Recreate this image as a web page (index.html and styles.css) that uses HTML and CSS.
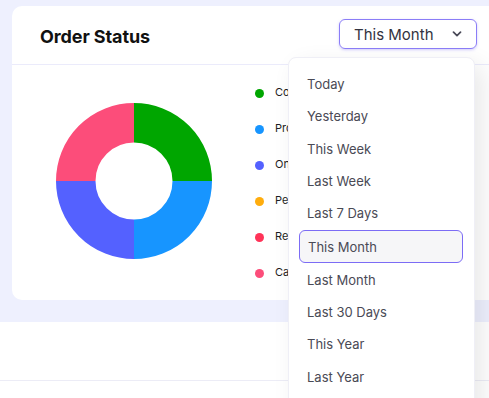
FILE: index.html
```html
<!DOCTYPE html>
<html>
<head>
<meta charset="utf-8">
<link rel="stylesheet" href="styles.css">
</head>
<body>
<div class="page">
  <div class="card">
    <div class="card-head">
      <h2 class="title">Order Status</h2>
      <div class="select">
        <span>This Month</span>
        <svg class="chev" width="10" height="6" viewBox="0 0 10 6"><path d="M1.5 1.2l3.5 3.5 3.5-3.5" fill="none" stroke="#4a4a58" stroke-width="1.7" stroke-linecap="round" stroke-linejoin="round"/></svg>
      </div>
    </div>
    <div class="card-body">
      <svg class="donut" width="156" height="156" viewBox="0 0 156 156">
        <path d="M78 19.75A58.25 58.25 0 0 1 136.25 78" fill="none" stroke="#00a600" stroke-width="39.5"/>
        <path d="M136.25 78A58.25 58.25 0 0 1 78 136.25" fill="none" stroke="#1795ff" stroke-width="39.5"/>
        <path d="M78 136.25A58.25 58.25 0 0 1 19.75 78" fill="none" stroke="#5461ff" stroke-width="39.5"/>
        <path d="M19.75 78A58.25 58.25 0 0 1 78 19.75" fill="none" stroke="#fc4d7a" stroke-width="39.5"/>
      </svg>
      <ul class="legend">
        <li><i class="dot green"></i>Completed</li>
        <li><i class="dot blue"></i>Processing</li>
        <li><i class="dot indigo"></i>On Hold</li>
        <li><i class="dot orange"></i>Pending</li>
        <li><i class="dot red"></i>Refunded</li>
        <li><i class="dot pink"></i>Cancelled</li>
      </ul>
    </div>
  </div>
  <div class="lower">
    <div class="lower-head"></div>
  </div>
</div>
<ul class="menu">
  <li>Today</li>
  <li>Yesterday</li>
  <li>This Week</li>
  <li>Last Week</li>
  <li>Last 7 Days</li>
  <li class="active">This Month</li>
  <li>Last Month</li>
  <li>Last 30 Days</li>
  <li>This Year</li>
  <li>Last Year</li>
</ul>
</body>
</html>
```
FILE: styles.css
```css
html, body {
  margin: 0;
  padding: 0;
  overflow: hidden;
  height: 398px;
}
body {
  background: #eef0fe;
  font-family: Inter, "Noto Sans", sans-serif;
  position: relative;
}
.page {
  padding-top: 6px;
}
.card {
  margin-left: 12px;
  width: 497px;
  background: #fff;
  border-radius: 10px;
  margin-bottom: 22px;
}
.card-head {
  height: 58px;
  display: flex;
  align-items: center;
  border-bottom: 1px solid #ebebfb;
  padding-left: 28px;
}
.title {
  margin: 2px 0 0 0;
  font-size: 18px;
  font-weight: 700;
  color: #111;
  letter-spacing: -0.1px;
}
.select {
  margin-left: auto;
  margin-right: 32px;
  margin-top: -2px;
  width: 138px;
  height: 30px;
  box-sizing: border-box;
  border: 1.5px solid #8b7df7;
  border-radius: 6px;
  box-shadow: 0 1px 3px rgba(124, 108, 245, 0.35);
  display: flex;
  align-items: center;
  padding: 0 14px 0 14px;
  font-size: 15px;
  color: #333340;
}
.select .chev {
  margin-left: auto;
}
.card-body {
  height: 235px;
  display: flex;
  align-items: flex-start;
  padding: 9px 0 0 44px;
  box-sizing: border-box;
}
.donut {
  margin-top: 29px;
  display: block;
}
.legend {
  list-style: none;
  margin: 0 0 0 43px;
  padding: 0;
}
.legend li {
  height: 36px;
  display: flex;
  align-items: center;
  font-size: 11px;
  font-weight: 400;
  color: #1e1e24;
}
.dot {
  width: 9px;
  height: 9px;
  border-radius: 50%;
  margin-right: 11px;
  margin-top: 3px;
}
.green { background: #00a600; }
.blue { background: #1795ff; }
.indigo { background: #5461ff; }
.orange { background: #ffad0d; }
.red { background: #ff3358; }
.pink { background: #fc4d7a; }
.lower {
  background: #fff;
  height: 80px;
}
.lower-head {
  height: 58px;
  border-bottom: 1px solid #ececf6;
}
.menu {
  position: absolute;
  left: 288px;
  top: 57px;
  width: 187px;
  height: 360px;
  box-sizing: border-box;
  margin: 0;
  padding: 10px 0 0 0;
  list-style: none;
  background: #fff;
  border: 1px solid #efeff6;
  border-radius: 8px;
  box-shadow: 8px 8px 24px rgba(0, 0, 0, 0.09);
}
.menu li {
  height: 32.3px;
  display: flex;
  align-items: center;
  padding-left: 18px;
  font-size: 13px;
  color: #4a4a55;
}
.menu li.active {
  height: 33px;
  box-sizing: border-box;
  margin: 1px 11px 0 10px;
  padding-left: 8px;
  border: 1px solid #7c6cf5;
  border-radius: 6px;
  background: #f6f6f8;
}
```
